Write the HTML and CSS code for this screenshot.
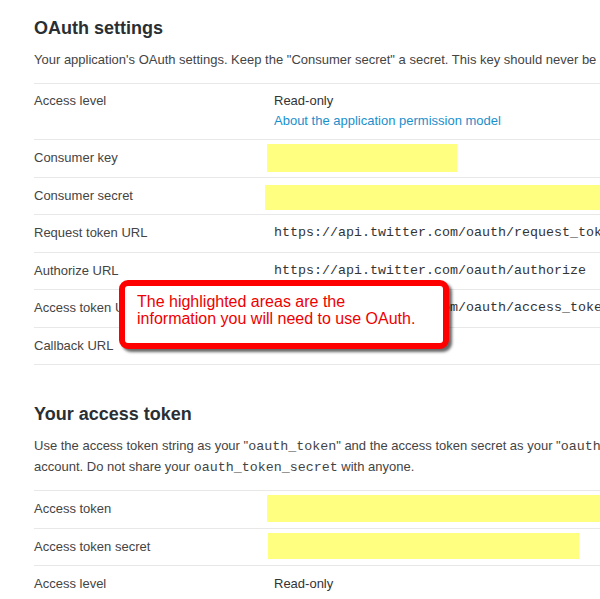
FILE: index.html
```html
<!DOCTYPE html>
<html lang="en">
<head>
    <meta charset="UTF-8">
    <meta name="viewport" content="width=device-width, initial-scale=1.0">
    <title>OAuth settings</title>
    <link rel="stylesheet" href="styles.css">
</head>
<body>
    <div class="page">
        <!-- OAuth settings -->
        <section class="section">
            <h2>OAuth settings</h2>
            <p class="desc">Your application's OAuth settings. Keep the "Consumer secret" a secret. This key should never be human-readable in your application.</p>
            <div class="rows">
                <div class="row row-tall">
                    <span class="label">Access level</span>
                    <div class="value">
                        <div>Read-only</div>
                        <a href="#" class="link">About the application permission model</a>
                    </div>
                </div>
                <div class="row">
                    <span class="label">Consumer key</span>
                    <div class="value"><span class="mark mark-key"></span></div>
                </div>
                <div class="row">
                    <span class="label">Consumer secret</span>
                    <div class="value"><span class="mark mark-wide mark-left"></span></div>
                </div>
                <div class="row">
                    <span class="label">Request token URL</span>
                    <div class="value mono">https://api.twitter.com/oauth/request_token</div>
                </div>
                <div class="row">
                    <span class="label">Authorize URL</span>
                    <div class="value mono">https://api.twitter.com/oauth/authorize</div>
                </div>
                <div class="row">
                    <span class="label">Access token URL</span>
                    <div class="value mono">https://api.twitter.com/oauth/access_token</div>
                </div>
                <div class="row">
                    <span class="label">Callback URL</span>
                    <div class="value mono">None</div>
                </div>
            </div>
        </section>

        <!-- Your access token -->
        <section class="section section-next">
            <h2>Your access token</h2>
            <p class="desc">Use the access token string as your "<code>oauth_token</code>" and the access token secret as your "<code>oauth_token_secret</code>" to sign requests with your own Twitter account. Do not share your <code>oauth_token_secret</code> with anyone.</p>
            <div class="rows">
                <div class="row">
                    <span class="label">Access token</span>
                    <div class="value"><span class="mark mark-wide"></span></div>
                </div>
                <div class="row">
                    <span class="label">Access token secret</span>
                    <div class="value"><span class="mark mark-secret"></span></div>
                </div>
                <div class="row">
                    <span class="label">Access level</span>
                    <div class="value">Read-only</div>
                </div>
            </div>
        </section>

        <!-- Annotation callout -->
        <div class="callout">
            The highlighted areas are the<br>
            information you will need to use OAuth.
        </div>
    </div>
</body>
</html>
```

FILE: styles.css
```css
/* Global Styles */
body {
    margin: 0;
    background: #fff;
    color: #333;
    font-family: "Liberation Sans", Arial, sans-serif;
    font-size: 13px;
    overflow: hidden;
}

.page {
    position: relative;
    width: 928px;
    padding: 17px 0 0 34px;
}

h2 {
    margin: 0 0 10px;
    font-size: 18px;
    line-height: 22px;
    font-weight: bold;
    color: #292f33;
}

.section-next {
    margin-top: 38px;
}

.desc {
    margin: 0 0 13px;
    line-height: 21px;
    color: #444;
}

code,
.mono {
    font-family: "Liberation Mono", "Courier New", monospace;
    font-size: 13.33px;
}

code {
    line-height: 1;
}

/* Settings rows */
.rows {
    border-top: 1px solid #e8e8e8;
}

.row {
    display: flex;
    padding: 8px 0 8.5px;
    line-height: 20px;
    border-bottom: 1px solid #e8e8e8;
}

.row-tall {
    padding: 7px 0 8px;
}

.label {
    flex: 0 0 240px;
    color: #444;
}

.value {
    flex: 1;
    color: #333;
    white-space: nowrap;
}

.link {
    color: #1a8fcc;
    text-decoration: none;
}

/* Yellow highlight marks */
.mark {
    display: block;
    height: 27px;
    margin: -4px 0 -3px -7px;
    background: #ffff80;
}

.mark-key {
    width: 190px;
    height: 28px;
    margin-bottom: -4px;
}

.mark-wide {
    width: 460px;
}

.mark-left {
    margin-left: -9px;
    height: 25px;
    margin-top: -1px;
    margin-bottom: -4px;
}

.mark-secret {
    width: 311px;
    margin-left: -6px;
    height: 26px;
    margin-bottom: -3px;
}

/* Annotation callout */
.callout {
    position: absolute;
    left: 119px;
    top: 280px;
    width: 306px;
    height: 50px;
    padding: 7px 0 0 12px;
    border: 6px solid #f00;
    border-radius: 9px;
    background: #fff;
    box-shadow: 3px 3px 3px rgba(0, 0, 0, 0.6);
    color: #e00;
    font-size: 16px;
    line-height: 17px;
}
```
